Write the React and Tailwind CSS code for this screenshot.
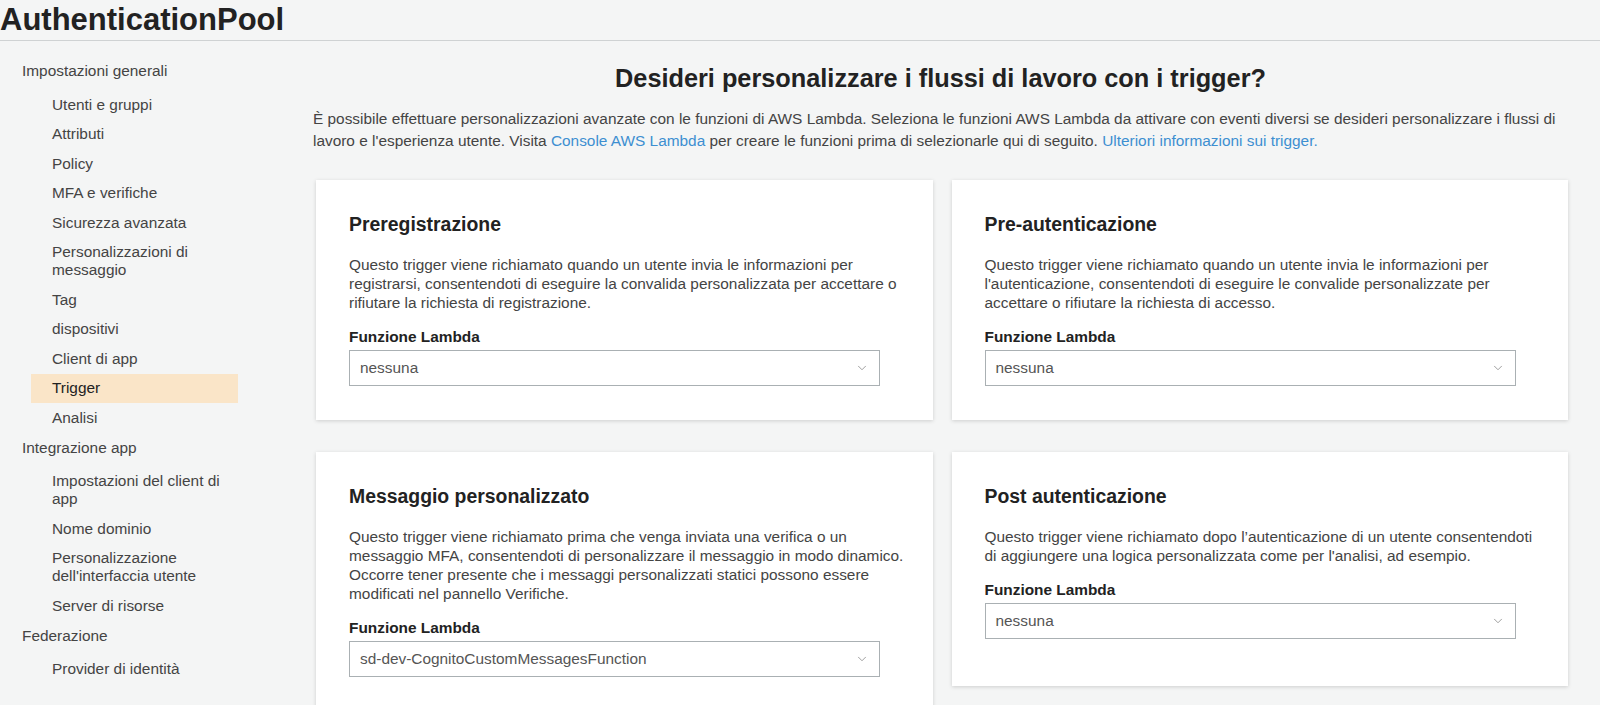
import { ChevronDown } from "lucide-react";

const nav = [
  { label: "Impostazioni generali", children: ["Utenti e gruppi", "Attributi", "Policy", "MFA e verifiche", "Sicurezza avanzata", "Personalizzazioni di messaggio", "Tag", "dispositivi", "Client di app", "Trigger", "Analisi"] },
  { label: "Integrazione app", children: ["Impostazioni del client di app", "Nome dominio", "Personalizzazione dell'interfaccia utente", "Server di risorse"] },
  { label: "Federazione", children: ["Provider di identità"] },
];

const triggers = [
  {
    title: "Preregistrazione",
    text: "Questo trigger viene richiamato quando un utente invia le informazioni per registrarsi, consentendoti di eseguire la convalida personalizzata per accettare o rifiutare la richiesta di registrazione.",
    value: "nessuna",
  },
  {
    title: "Pre-autenticazione",
    text: "Questo trigger viene richiamato quando un utente invia le informazioni per l'autenticazione, consentendoti di eseguire le convalide personalizzate per accettare o rifiutare la richiesta di accesso.",
    value: "nessuna",
  },
  {
    title: "Messaggio personalizzato",
    text: "Questo trigger viene richiamato prima che venga inviata una verifica o un messaggio MFA, consentendoti di personalizzare il messaggio in modo dinamico. Occorre tener presente che i messaggi personalizzati statici possono essere modificati nel pannello Verifiche.",
    value: "sd-dev-CognitoCustomMessagesFunction",
  },
  {
    title: "Post autenticazione",
    text: "Questo trigger viene richiamato dopo l’autenticazione di un utente consentendoti di aggiungere una logica personalizzata come per l'analisi, ad esempio.",
    value: "nessuna",
  },
];

function TriggerCard({ t }) {
  return (
    <article className="bg-white shadow-[0_1px_4px_rgba(0,0,0,0.16)] min-h-[234px] pl-[33px] pr-[20px] pt-[32px] pb-[34px] self-start">
      <h3 className="text-[19.4px] leading-6 font-bold text-[#222]">{t.title}</h3>
      <p className="mt-[19px] text-[15.4px] leading-[19px] text-[#444]">{t.text}</p>
      <p className="mt-[15px] text-[15.4px] leading-[19px] font-bold text-[#222]">Funzione Lambda</p>
      <div className="mt-[4px] w-[531px] h-9 border border-[#aab0b3] flex items-center justify-between pl-[10px] pr-[10px] text-[15.4px] text-[#555]">
        <span>{t.value}</span>
        <ChevronDown size={14} strokeWidth={1.2} className="text-[#777]" />
      </div>
    </article>
  );
}

export default function App() {
  return (
    <div className="min-h-[705px] bg-[#f4f5f5] font-['Liberation_Sans',Arial,sans-serif] text-[#444]">
      <header className="h-[41px] border-b border-[#cfd2d3] flex items-center">
        <h1 className="text-[31px] font-bold leading-none text-[#222] -mt-[2px]">AuthenticationPool</h1>
      </header>

      <div className="flex">
        {/* Sidebar */}
        <nav className="w-[313px] shrink-0 pt-[15px] text-[15.4px] leading-[18px] text-[#444]">
          {nav.map((g) => (
            <div key={g.label}>
              <div className="pl-[22px] py-[6px]">{g.label}</div>
              <div className="mt-[4px]">
                {g.children.map((c) => (
                  <div
                    key={c}
                    className={`ml-[31px] w-[207px] pl-[21px] pr-2 py-[5.75px] ${c === "Trigger" ? "bg-[#fae5c8] text-[#222]" : ""}`}
                  >
                    {c}
                  </div>
                ))}
              </div>
            </div>
          ))}
        </nav>

        {/* Main */}
        <main className="flex-1 pr-[32px] pt-[22px]">
          <h2 className="text-center text-[25.3px] leading-[30px] font-bold text-[#222]">
            Desideri personalizzare i flussi di lavoro con i trigger?
          </h2>
          <p className="mt-[15px] text-[15.4px] leading-[22px] text-[#444]">
            È possibile effettuare personalizzazioni avanzate con le funzioni di AWS Lambda. Seleziona le funzioni AWS Lambda da attivare con eventi diversi se desideri personalizzare i flussi di lavoro e l'esperienza utente. Visita <span className="text-[#3d8fd1]">Console AWS Lambda</span> per creare le funzioni prima di selezionarle qui di seguito. <span className="text-[#3d8fd1]">Ulteriori informazioni sui trigger.</span>
          </p>
          <div className="mt-[28px] ml-[3px] grid grid-cols-2 gap-x-[19px] gap-y-[32px] items-start">
            {triggers.map((t) => (
              <TriggerCard key={t.title} t={t} />
            ))}
          </div>
        </main>
      </div>
    </div>
  );
}
